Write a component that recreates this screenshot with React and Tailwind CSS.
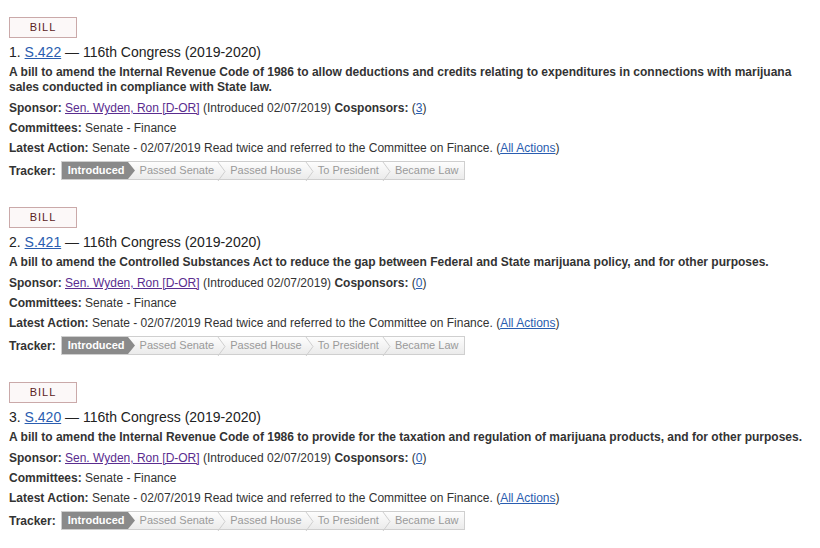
import React from 'react';

const bills = [
  {
    num: 1,
    id: 'S.422',
    title:
      'A bill to amend the Internal Revenue Code of 1986 to allow deductions and credits relating to expenditures in connections with marijuana sales conducted in compliance with State law.',
    cosponsors: 3,
  },
  {
    num: 2,
    id: 'S.421',
    title:
      'A bill to amend the Controlled Substances Act to reduce the gap between Federal and State marijuana policy, and for other purposes.',
    cosponsors: 0,
  },
  {
    num: 3,
    id: 'S.420',
    title:
      'A bill to amend the Internal Revenue Code of 1986 to provide for the taxation and regulation of marijuana products, and for other purposes.',
    cosponsors: 0,
  },
];

const steps = ['Passed Senate', 'Passed House', 'To President', 'Became Law'];

const Chevron = () => (
  <svg width="9" height="19" viewBox="0 0 9 19" className="shrink-0">
    <polyline points="1,0 8,9.5 1,19" fill="none" stroke="#cfcfcf" strokeWidth="1" />
  </svg>
);

const Tracker = () => (
  <div className="flex items-center mt-[3px]">
    <span className="font-bold text-[12px] mr-[5px] text-[#333]">Tracker:</span>
    <div className="flex items-stretch h-[19px] border border-[#cfcfcf] bg-gradient-to-b from-[#fdfdfd] to-[#ebebeb] text-[11px] leading-[17px]">
      <div className="flex items-stretch">
        <span className="bg-[#8a8a8a] text-white font-bold pl-[6px] pr-[3px]">Introduced</span>
        <svg width="8" height="17" viewBox="0 0 8 17" className="shrink-0">
          <polygon points="0,0 7,8.5 0,17" fill="#8a8a8a" />
        </svg>
      </div>
      {steps.map((s, i) => (
        <div key={s} className="flex items-stretch">
          <span className="text-[#9a9a9a] pl-[4px] pr-[3px]">{s}</span>
          {i < steps.length - 1 && <Chevron />}
        </div>
      ))}
      <span className="w-[3px]" />
    </div>
  </div>
);

const Bill = ({ bill }) => (
  <div className="mb-[27px]">
    <div className="w-[68px] h-[21px] border border-[#caa9a9] bg-[#fcf8f8] flex items-center justify-center text-[11px] tracking-[1px] text-[#5b2323] mb-[4px]">
      BILL
    </div>
    <div className="text-[14px] leading-[20px] text-[#222]">
      {bill.num}.{' '}
      <a href="#" className="text-[#2a5db0] underline">{bill.id}</a> — 116th Congress (2019-2020)
    </div>
    <div className="mt-[3px] text-[12px] leading-[15px] font-bold text-[#333]">{bill.title}</div>
    <div className="mt-[3px] text-[12px] leading-[20px] text-[#333]">
      <div>
        <span className="font-bold">Sponsor:</span>{' '}
        <a href="#" className="text-[#5a2d8f] underline">Sen. Wyden, Ron [D-OR]</a> (Introduced 02/07/2019){' '}
        <span className="font-bold">Cosponsors:</span> (
        <a href="#" className="text-[#2a5db0] underline">{bill.cosponsors}</a>)
      </div>
      <div>
        <span className="font-bold">Committees:</span> Senate - Finance
      </div>
      <div>
        <span className="font-bold">Latest Action:</span> Senate - 02/07/2019 Read twice and referred to the Committee on Finance. (
        <a href="#" className="text-[#2a5db0] underline">All Actions</a>)
      </div>
    </div>
    <Tracker />
  </div>
);

export default function App() {
  return (
    <div className="w-[820px] h-[548px] bg-white overflow-hidden pl-[9px] pt-[17px] font-['Liberation_Sans',Arial,sans-serif]">
      {bills.map((b) => (
        <Bill key={b.id} bill={b} />
      ))}
    </div>
  );
}
